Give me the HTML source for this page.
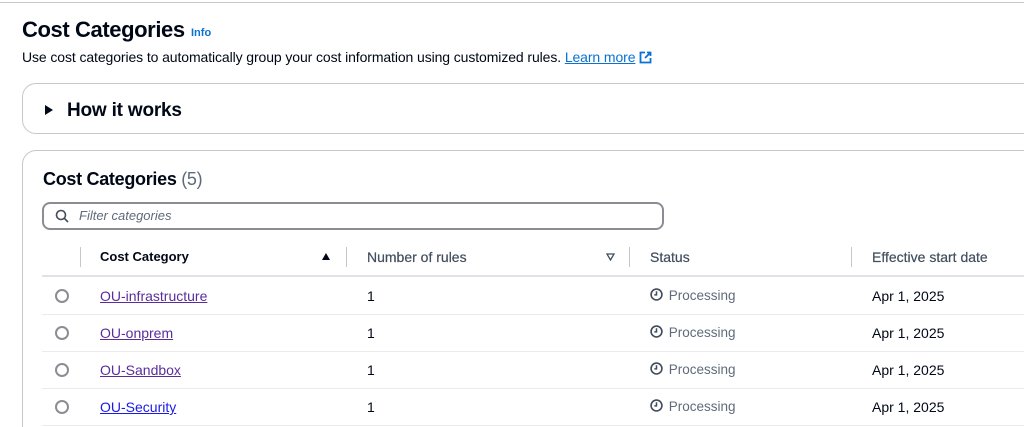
<!DOCTYPE html>
<html><head><style>
*{margin:0;padding:0;box-sizing:border-box}
html,body{width:1024px;height:427px;overflow:hidden}
body{background:#fff;font-family:"Liberation Sans",Arial,sans-serif;color:#000716;position:relative}
.a{position:absolute;white-space:nowrap}
.topline{left:0;top:2px;width:1024px;height:1px;background:#c6c6cd}
h1{position:absolute;left:22px;top:17px;font-size:22px;font-weight:bold;letter-spacing:-0.4px}
.info{left:191px;top:27px;font-size:11px;font-weight:bold;color:#0972d3}
.sub{left:22px;top:49px;font-size:14px;letter-spacing:-0.1px}
.sub a{color:#0972d3;text-decoration:underline}
.box1{left:22px;top:83px;width:1040px;height:51px;border:1px solid #c6c6cd;border-radius:14px}
.how{left:67px;top:100px;font-size:19px;font-weight:bold;letter-spacing:-0.2px}
.tri{left:45px;top:105px;width:0;height:0;border-left:8px solid #000716;border-top:5px solid transparent;border-bottom:5px solid transparent}
.box2{left:22px;top:150px;width:1002px;height:277px;border:1px solid #c6c6cd;border-right:none;border-bottom:none;border-radius:14px 0 0 0}
.h2{left:43px;top:169px;font-size:18px;font-weight:bold;letter-spacing:-0.3px}
.h2 span{font-weight:normal;color:#5f6b7a}
.filter{left:42px;top:202px;width:622px;height:28px;border:2px solid #8c8c94;border-radius:8px}
.ph{left:79px;top:208px;font-size:13px;font-style:italic;color:#5f6b7a}
.th{top:249px;font-size:13px;font-weight:bold;color:#000716}
.th.n{font-size:14px;color:#414d5c;font-weight:normal;-webkit-text-stroke:0.2px #414d5c}
.sep{top:247px;width:1px;height:20px;background:#c6c6cd}
.hl{left:42px;width:982px;height:1px;background:#e9ebed}
.td{font-size:14px}
.lnk{color:#5a2d9b;text-decoration:underline}
.rad{left:55px;width:14px;height:14px;border:2px solid #8c8c94;border-radius:50%}
.clk{width:13px;height:13px;margin-right:2px}
.st{color:#5f6b7a;font-size:13.5px}
</style></head><body>
<div class="a topline"></div>
<h1>Cost Categories</h1>
<div class="a info">Info</div>
<div class="a sub">Use cost categories to automatically group your cost information using customized rules. <a>Learn more</a> <svg width="13" height="13" viewBox="0 0 13 13" style="vertical-align:-2px"><path d="M6 1.5H1.5v10h10V7M8 1.5h3.5V5M11.5 1.5L6 7" fill="none" stroke="#0972d3" stroke-width="1.8"/></svg></div>
<div class="a box1"></div>
<div class="a tri"></div>
<div class="a how">How it works</div>
<div class="a box2"></div>
<div class="a h2">Cost Categories <span>(5)</span></div>
<div class="a filter"></div>
<svg class="a" style="left:55px;top:209px" width="14" height="14" viewBox="0 0 14 14"><circle cx="6" cy="6" r="4.5" fill="none" stroke="#414d5c" stroke-width="1.6"/><path d="M9.3 9.3L13 13" stroke="#414d5c" stroke-width="1.6"/></svg>
<div class="a ph">Filter categories</div>
<div class="a sep" style="left:80px"></div>
<div class="a th" style="left:100px">Cost Category</div>
<div class="a" style="left:322px;top:253px;width:0;height:0;border-bottom:7px solid #000716;border-left:4.5px solid transparent;border-right:4.5px solid transparent"></div>
<div class="a sep" style="left:346px"></div>
<div class="a th n" style="left:367px">Number of rules</div>
<svg class="a" style="left:606px;top:253px" width="9" height="8" viewBox="0 0 9 8"><path d="M1 1h7L4.5 7z" fill="none" stroke="#414d5c" stroke-width="1.3"/></svg>
<div class="a sep" style="left:629px"></div>
<div class="a th n" style="left:650px">Status</div>
<div class="a sep" style="left:851px"></div>
<div class="a th n" style="left:872px">Effective start date</div>
<div class="a hl" style="top:275px;height:2px;background:#dfe2e6"></div>

<div class="a rad" style="top:289px"></div>
<div class="a td lnk" style="left:100px;top:288px">OU-infrastructure</div>
<div class="a td" style="left:367px;top:288px">1</div>
<div class="a st" style="left:650px;top:288px"><svg class="clk" viewBox="0 0 12 12" style="vertical-align:-1px"><circle cx="6" cy="6" r="5" fill="none" stroke="#414d5c" stroke-width="1.5"/><path d="M6 3v3.3H4" fill="none" stroke="#414d5c" stroke-width="1.4"/></svg> Processing</div>
<div class="a td" style="left:872px;top:288px">Apr 1, 2025</div>
<div class="a hl" style="top:314px"></div>

<div class="a rad" style="top:326px"></div>
<div class="a td lnk" style="left:100px;top:325px">OU-onprem</div>
<div class="a td" style="left:367px;top:325px">1</div>
<div class="a st" style="left:650px;top:325px"><svg class="clk" viewBox="0 0 12 12" style="vertical-align:-1px"><circle cx="6" cy="6" r="5" fill="none" stroke="#414d5c" stroke-width="1.5"/><path d="M6 3v3.3H4" fill="none" stroke="#414d5c" stroke-width="1.4"/></svg> Processing</div>
<div class="a td" style="left:872px;top:325px">Apr 1, 2025</div>
<div class="a hl" style="top:351px"></div>

<div class="a rad" style="top:363px"></div>
<div class="a td lnk" style="left:100px;top:362px">OU-Sandbox</div>
<div class="a td" style="left:367px;top:362px">1</div>
<div class="a st" style="left:650px;top:362px"><svg class="clk" viewBox="0 0 12 12" style="vertical-align:-1px"><circle cx="6" cy="6" r="5" fill="none" stroke="#414d5c" stroke-width="1.5"/><path d="M6 3v3.3H4" fill="none" stroke="#414d5c" stroke-width="1.4"/></svg> Processing</div>
<div class="a td" style="left:872px;top:362px">Apr 1, 2025</div>
<div class="a hl" style="top:388px"></div>

<div class="a rad" style="top:400px"></div>
<div class="a td lnk" style="left:100px;top:399px;color:#1a1ae6">OU-Security</div>
<div class="a td" style="left:367px;top:399px">1</div>
<div class="a st" style="left:650px;top:399px"><svg class="clk" viewBox="0 0 12 12" style="vertical-align:-1px"><circle cx="6" cy="6" r="5" fill="none" stroke="#414d5c" stroke-width="1.5"/><path d="M6 3v3.3H4" fill="none" stroke="#414d5c" stroke-width="1.4"/></svg> Processing</div>
<div class="a td" style="left:872px;top:399px">Apr 1, 2025</div>
<div class="a hl" style="top:425px"></div>
</body></html>
